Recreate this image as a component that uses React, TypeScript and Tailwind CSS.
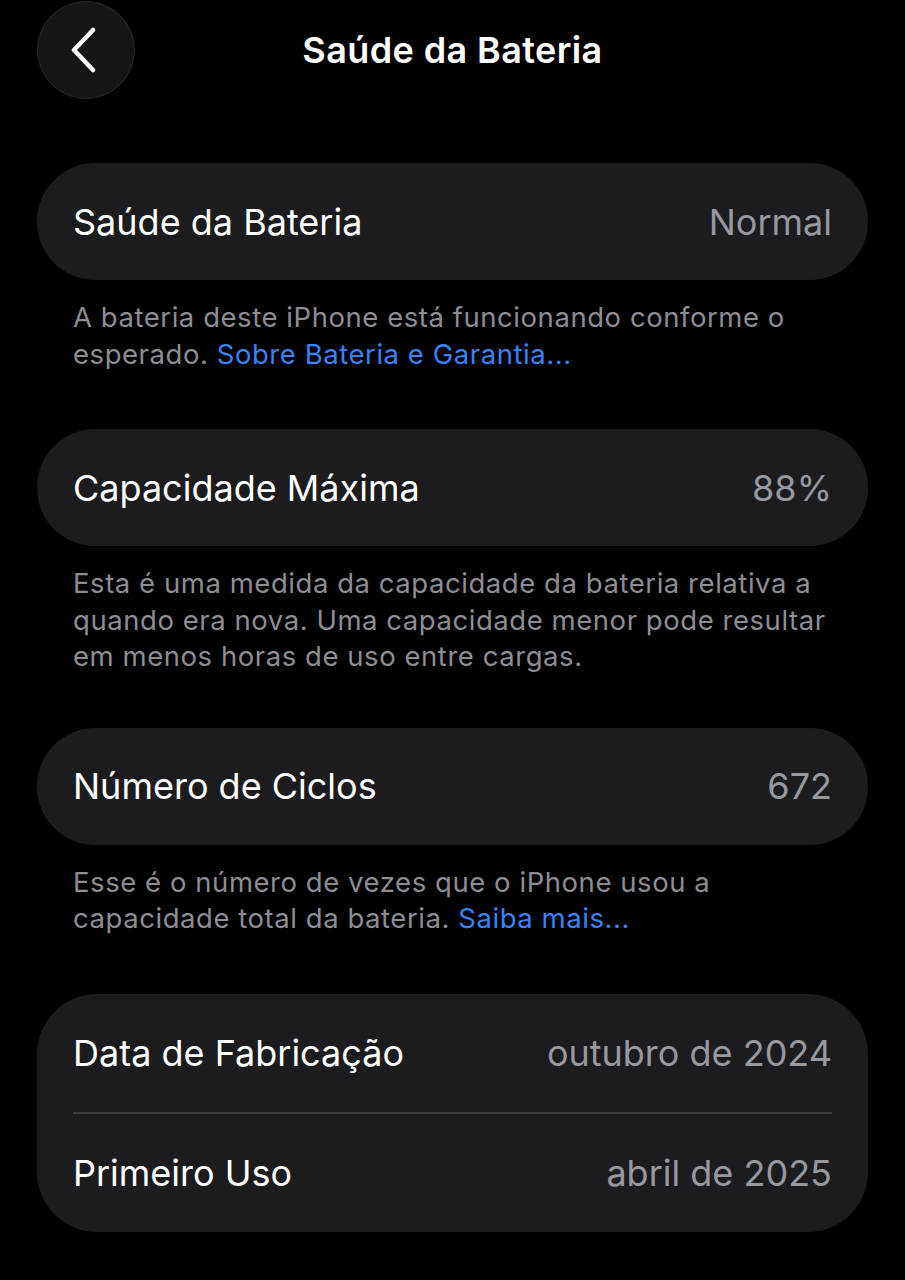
import { ReactNode } from 'react';

const font = { fontFamily: 'Inter, "Noto Sans", sans-serif' };

function Row({ label, value }: { label: string; value: string }) {
  return (
    <div className="flex h-[117px] items-center justify-between px-[36px]">
      <span className="text-[36px] text-white">{label}</span>
      <span className="text-[36px] text-[#98989f]">{value}</span>
    </div>
  );
}

function Card({ children }: { children: ReactNode }) {
  return <div className="rounded-[58px] bg-[#1c1c1e]">{children}</div>;
}

function Footer({ children, tight }: { children: ReactNode; tight?: boolean }) {
  return (
    <p
      className={
        'px-[36px] pt-[19px] text-[27.5px] leading-[36.5px] tracking-[0.55px] text-[#8d8d93] ' +
        (tight ? 'pb-[53px]' : 'pb-[57px]')
      }
    >
      {children}
    </p>
  );
}

function Link({ children }: { children: ReactNode }) {
  return <span className="text-[#3a82f7]">{children}</span>;
}

export default function App() {
  return (
    <div className="min-h-[1280px] w-[905px] bg-black" style={font}>
      {/* Header */}
      <div className="relative flex h-[100px] items-center justify-center">
        <button className="absolute left-[37px] top-[1px] flex h-[98px] w-[98px] items-center justify-center rounded-full border border-[#2a2a2c] bg-[#161618]">
          <svg width="30" height="46" viewBox="0 0 30 46" fill="none" className="-ml-[4px]">
            <path
              d="M24 3 L5 23 L24 43"
              stroke="white"
              strokeWidth="4.5"
              strokeLinecap="round"
              strokeLinejoin="round"
            />
          </svg>
        </button>
        <h1 className="text-[36px] font-semibold text-white tracking-[0.4px]">Saúde da Bateria</h1>
      </div>

      <div className="px-[37px] pt-[63px]">
        <Card>
          <Row label="Saúde da Bateria" value="Normal" />
        </Card>
        <Footer>
          A bateria deste iPhone está funcionando conforme o esperado.{' '}
          <Link>Sobre Bateria e Garantia...</Link>
        </Footer>

        <Card>
          <Row label="Capacidade Máxima" value="88%" />
        </Card>
        <Footer tight>
          Esta é uma medida da capacidade da bateria relativa a quando era nova. Uma capacidade menor
          pode resultar em menos horas de uso entre cargas.
        </Footer>

        <Card>
          <Row label="Número de Ciclos" value="672" />
        </Card>
        <Footer>
          Esse é o número de vezes que o iPhone usou a capacidade total da bateria.{' '}
          <Link>Saiba mais...</Link>
        </Footer>

        <div className="rounded-[60px] bg-[#1c1c1e]">
          <div className="flex h-[118px] items-center justify-between px-[36px]">
            <span className="text-[36px] text-white">Data de Fabricação</span>
            <span className="text-[36px] text-[#98989f]">outubro de 2024</span>
          </div>
          <div className="mx-[36px] h-[2px] bg-[#38383a]" />
          <div className="flex h-[118px] items-center justify-between px-[36px]">
            <span className="text-[36px] text-white">Primeiro Uso</span>
            <span className="text-[36px] text-[#98989f]">abril de 2025</span>
          </div>
        </div>
      </div>
    </div>
  );
}
